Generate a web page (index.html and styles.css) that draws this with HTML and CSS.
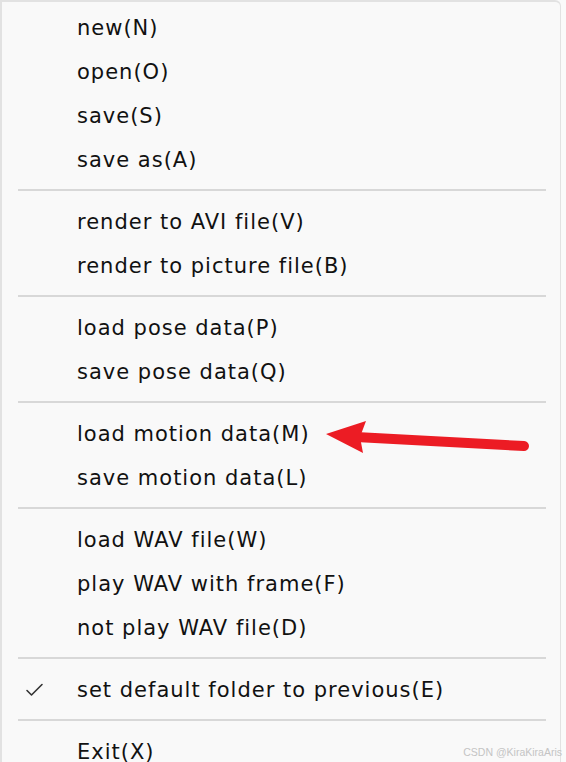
FILE: index.html
```html
<!DOCTYPE html>
<html>
<head>
<meta charset="utf-8">
<link rel="stylesheet" href="styles.css">
</head>
<body>
<div class="menu">
  <div class="item">new(N)</div>
  <div class="item">open(O)</div>
  <div class="item">save(S)</div>
  <div class="item">save as(A)</div>
  <div class="sep"></div>
  <div class="item">render to AVI file(V)</div>
  <div class="item">render to picture file(B)</div>
  <div class="sep"></div>
  <div class="item">load pose data(P)</div>
  <div class="item">save pose data(Q)</div>
  <div class="sep"></div>
  <div class="item">load motion data(M)</div>
  <div class="item">save motion data(L)</div>
  <div class="sep"></div>
  <div class="item">load WAV file(W)</div>
  <div class="item">play WAV with frame(F)</div>
  <div class="item">not play WAV file(D)</div>
  <div class="sep"></div>
  <div class="item checked"><svg class="check" width="20" height="16" viewBox="0 0 20 16"><path d="M2 8.5 L6.5 13 L17 2.5" fill="none" stroke="#333" stroke-width="1.6" stroke-linecap="round" stroke-linejoin="round"/></svg>set default folder to previous(E)</div>
  <div class="sep"></div>
  <div class="item">Exit(X)</div>
</div>
<svg class="arrow" width="566" height="762" viewBox="0 0 566 762">
  <line x1="356" y1="437" x2="524" y2="446" stroke="#ec1c24" stroke-width="10" stroke-linecap="round"/>
  <polygon points="326,434 366,421 360,437 363,453" fill="#ec1c24"/>
</svg>
<div class="watermark">CSDN @KiraKiraAris</div>
</body>
</html>
```

FILE: styles.css
```css
html, body {
  margin: 0;
  padding: 0;
  background: #fafafa;
  width: 566px;
  height: 762px;
  overflow: hidden;
  position: relative;
}
.menu {
  width: 561px;
  height: 780px;
  box-sizing: border-box;
  border-left: 2px solid #e2e2e2;
  border-top: 2px solid #e2e2e2;
  border-right: 1px solid #e2e2e2;
  border-top-right-radius: 6px;
  background: #f9f9f9;
  padding-top: 3px;
  font-family: "DejaVu Sans", sans-serif;
  font-size: 21px;
  letter-spacing: 1px;
  color: #111;
}
.item {
  height: 44px;
  box-sizing: border-box;
  padding-top: 2px;
  line-height: 42px;
  padding-left: 75px;
  position: relative;
  white-space: nowrap;
}
.check {
  position: absolute;
  left: 23px;
  top: 15px;
}
.sep {
  height: 18px;
  display: flex;
  align-items: center;
  padding: 0 14px 0 16px;
}
.sep::before {
  content: "";
  flex: 1;
  height: 2px;
  background: #d8d8d8;
}
.arrow {
  position: absolute;
  left: 0;
  top: 0;
}
.watermark {
  position: absolute;
  right: 4px;
  bottom: 4px;
  font-family: "Liberation Sans", sans-serif;
  font-size: 10.5px;
  color: #c4c4c4;
}
```
